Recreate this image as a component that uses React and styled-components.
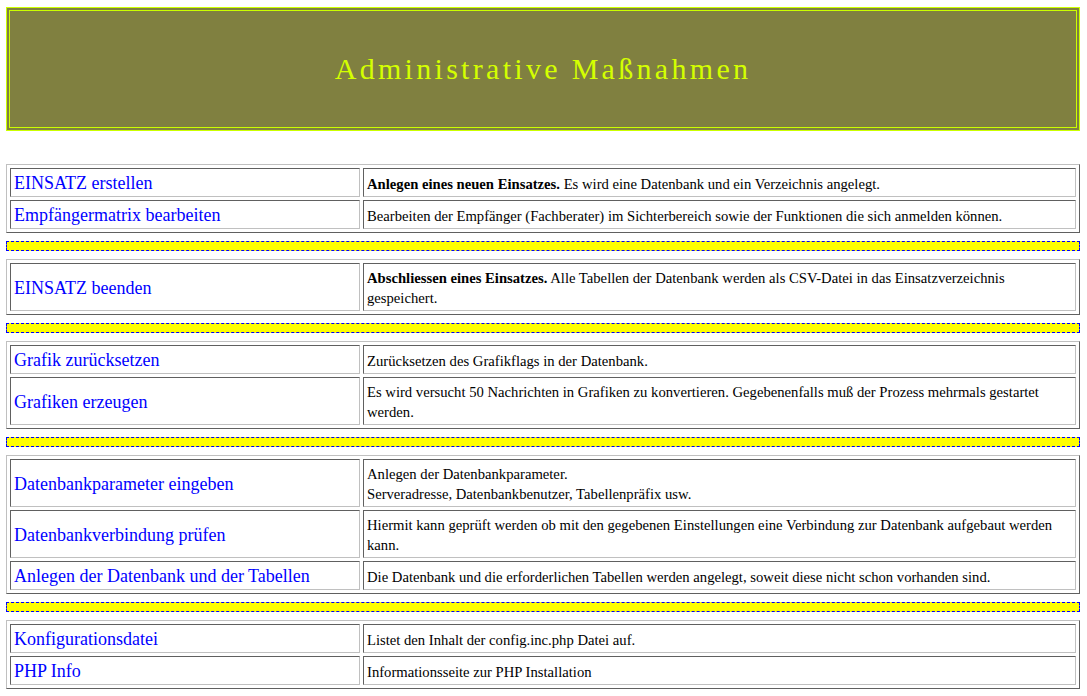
import React from 'react'
import styled, { createGlobalStyle } from 'styled-components'

const GlobalStyle = createGlobalStyle`
    body {
        margin: 0;
        background: #ffffff;
        font-family: "Liberation Serif", "Times New Roman", serif;
    }
`

const sections = [
    [
        { title: 'EINSATZ erstellen', strong: 'Anlegen eines neuen Einsatzes.', text: ' Es wird eine Datenbank und ein Verzeichnis angelegt.' },
        { title: 'Empfängermatrix bearbeiten', text: 'Bearbeiten der Empfänger (Fachberater) im Sichterbereich sowie der Funktionen die sich anmelden können.' },
    ],
    [
        { title: 'EINSATZ beenden', strong: 'Abschliessen eines Einsatzes.', text: ' Alle Tabellen der Datenbank werden als CSV-Datei in das Einsatzverzeichnis gespeichert.' },
    ],
    [
        { title: 'Grafik zurücksetzen', text: 'Zurücksetzen des Grafikflags in der Datenbank.' },
        { title: 'Grafiken erzeugen', text: 'Es wird versucht 50 Nachrichten in Grafiken zu konvertieren. Gegebenenfalls muß der Prozess mehrmals gestartet werden.' },
    ],
    [
        { title: 'Datenbankparameter eingeben', lines: ['Anlegen der Datenbankparameter.', 'Serveradresse, Datenbankbenutzer, Tabellenpräfix usw.'] },
        { title: 'Datenbankverbindung prüfen', text: 'Hiermit kann geprüft werden ob mit den gegebenen Einstellungen eine Verbindung zur Datenbank aufgebaut werden kann.' },
        { title: 'Anlegen der Datenbank und der Tabellen', text: 'Die Datenbank und die erforderlichen Tabellen werden angelegt, soweit diese nicht schon vorhanden sind.' },
    ],
    [
        { title: 'Konfigurationsdatei', text: 'Listet den Inhalt der config.inc.php Datei auf.' },
        { title: 'PHP Info', text: 'Informationsseite zur PHP Installation' },
    ],
]

class App extends React.Component {
    renderText(item) {
        if (item.lines) {
            return item.lines.map((line, i) => (
                <React.Fragment key={i}>
                    {i > 0 && <br />}
                    {line}
                </React.Fragment>
            ))
        }
        return (
            <>
                {item.strong && <Strong>{item.strong}</Strong>}
                {item.text}
            </>
        )
    }
    render() {
        return (
            <Page>
                <GlobalStyle />
                <Banner>
                    <BannerInner>
                        <Title>Administrative Maßnahmen</Title>
                    </BannerInner>
                </Banner>
                <Content>
                    {sections.map((rows, s) => (
                        <React.Fragment key={s}>
                            {s > 0 && <Divider />}
                            <Board>
                                {rows.map((item) => (
                                    <React.Fragment key={item.title}>
                                        <Cell>
                                            <Action href="#">{item.title}</Action>
                                        </Cell>
                                        <Cell>
                                            <Description>{this.renderText(item)}</Description>
                                        </Cell>
                                    </React.Fragment>
                                ))}
                            </Board>
                        </React.Fragment>
                    ))}
                </Content>
            </Page>
        )
    }
}

const Page = styled.div`
    width: 1074px;
    padding: 7px 0 0 6px;
    font-family: "Liberation Serif", "Times New Roman", serif;
`

const Banner = styled.div`
    border: 1px solid #ccff00;
    background-color: #808040;
    padding: 2px;
`

const BannerInner = styled.div`
    border: 1px solid #ccff00;
    height: 116px;
    display: flex;
    align-items: center;
    justify-content: center;
`

const Title = styled.h1`
    margin: 0;
    font-family: "Liberation Serif", "Times New Roman", serif;
    font-weight: normal;
    font-size: 30px;
    letter-spacing: 3.3px;
    color: #d4ff00;
`

const Content = styled.div`
    margin-top: 33px;
    display: flex;
    flex-direction: column;
`

const Board = styled.div`
    display: grid;
    grid-template-columns: 350px 1fr;
    gap: 3px;
    padding: 3px;
    border: 1px solid;
    border-color: #c0c0c0 #606060 #606060 #c0c0c0;
`

const Cell = styled.div`
    display: flex;
    align-items: center;
    padding: 4px 3px 2px;
    border: 1px solid;
    border-color: #606060 #c0c0c0 #c0c0c0 #606060;
`

const Action = styled.a`
    font-family: "Liberation Serif", "Times New Roman", serif;
    font-size: 18px;
    line-height: 21px;
    color: #0000ff;
    text-decoration: none;
`

const Description = styled.div`
    font-family: "Liberation Serif", "Times New Roman", serif;
    font-size: 14.67px;
    line-height: 20px;
    color: #000000;
`

const Strong = styled.b`
    font-family: "Liberation Serif", "Times New Roman", serif;
    font-weight: bold;
`

const Divider = styled.div`
    height: 8px;
    margin: 8px 0;
    background-color: #ffff00;
    border: 1px dashed #0000ff;
`

export default App
